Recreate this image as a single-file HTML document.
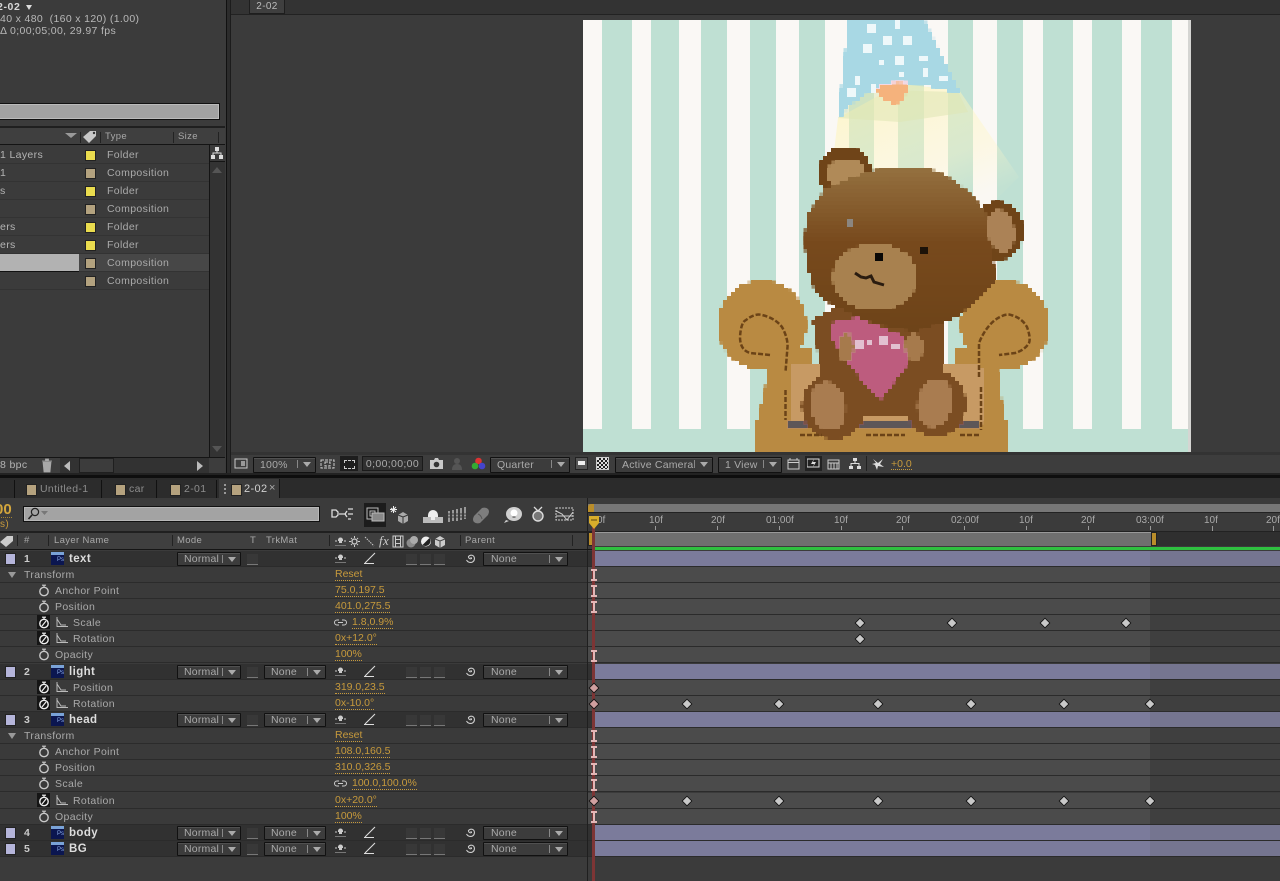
<!DOCTYPE html>
<html><head><meta charset="utf-8"><style>
html,body{margin:0;padding:0;background:#3b3b3b}
#p{position:relative;width:1280px;height:881px;overflow:hidden;background:#3b3b3b;font:10.5px/14px "Liberation Sans",sans-serif;color:#b4b4b4;letter-spacing:.35px;filter:blur(.3px)}
#p div,#p span,#p svg{position:absolute;display:block}
.t{white-space:nowrap}
.dd{height:12px;background:#3c3c3c;border:1px solid #111;border-radius:1px;box-shadow:inset 0 1px #505050;color:#aaa;line-height:12px;text-indent:6px;font-size:10.5px;letter-spacing:.2px;white-space:nowrap}
.dd:after{content:"";position:absolute;right:4px;top:4px;border:4px solid transparent;border-top:5px solid #aaa;border-bottom:0}
.dd:before{content:"";position:absolute;right:17px;top:2px;width:1px;height:8px;background:#888}
.r{left:0;width:1280px;height:16px;background:#3a3a3a;border-bottom:1px solid #2b2b2b;box-sizing:border-box}
.r .tr{left:588px;width:562px;top:0;height:15px;background:#4b4b4b}
.r .tr2{left:1150px;width:130px;top:0;height:15px;background:#3f3f3f}
.l{background:#313131}
.l .bar{left:594px;width:686px;top:0;height:15px;background:#7b7b9b}
.l .bar2{left:1150px;width:130px;top:0;height:15px;background:#757590}
.sw{left:5px;top:2px;width:9px;height:10px;background:#b5b5da;border:1px solid #222}
.n{left:24px;top:1px;font-weight:bold;color:#ccc}
.nm{left:69px;top:1px;font-weight:bold;color:#ddd;font-size:11.5px;letter-spacing:.4px}
.ps{left:51px;top:1px;width:13px;height:13px;background:#0b1650;border-top:3px solid #7aa3d8;box-sizing:border-box;font-size:6px;line-height:10px;text-align:right;color:#8fb0e8;letter-spacing:0}
.v{color:#c79a3c;border-bottom:1px dotted #c79a3c;line-height:11px;top:2px;white-space:nowrap;letter-spacing:0}
.pn{top:1px;white-space:nowrap;color:#aaa}
.k{width:6px;height:6px;background:#c9c9c9;border:1px solid #111;transform:rotate(45deg);z-index:3}
.i{left:591px;width:6px;height:12px;z-index:3;background:linear-gradient(#e3b7b7,#e3b7b7) 2px 0/2px 12px no-repeat,linear-gradient(#e3b7b7,#e3b7b7) 0 0/6px 2px no-repeat,linear-gradient(#e3b7b7,#e3b7b7) 0 10px/6px 2px no-repeat}
.box{top:3px;width:11px;height:10px;background:#383838;border-bottom:1px solid #777}
.c{color:#a8a8a8;top:0;white-space:nowrap}
.ty{left:107px;color:#aaa}
.cs{left:85px;width:9px;height:9px;border:1px solid #222}
.tab{top:480px;height:18px;background:#2c2c2c;border-right:1px solid #111}
.q{width:9px;height:10px;background:#b5a27e;top:484px;border:1px solid #222}
.rl{top:514px;font-size:10px;color:#aaa;white-space:nowrap;letter-spacing:0}
.tk{width:1px;height:4px;top:526px;background:#999}
.sh{left:335px;top:3px;width:11px;height:9px}
.ln{left:364px;top:1px;width:12px;height:12px}
.sp{left:465px;top:1px;width:11px;height:11px}
.st{left:38px;top:1px;width:12px;height:13px}
.stb{left:37px;top:0;width:13px;height:14px;background:#151515}
.gr{left:56px;top:2px;width:12px;height:10px}
</style></head><body><div id="p">
<svg width="0" height="0" style="left:0;top:0"><defs>
<symbol id="sw" viewBox="0 0 12 13"><circle cx="6" cy="7.500" r="4.200" fill="none" stroke="#c8c8c8" stroke-width="1.400"/><path d="M4 1.200h4M6 1.200v2" stroke="#c8c8c8" stroke-width="1.200"/></symbol>
<symbol id="sa" viewBox="0 0 12 13"><circle cx="6" cy="7.500" r="4.200" fill="none" stroke="#eee" stroke-width="1.400"/><path d="M4 1.200h4M6 1.200v2M4 10l4-5" stroke="#eee" stroke-width="1.200"/></symbol>
<symbol id="gr" viewBox="0 0 12 10"><path d="M1 0v9.500h11M1 2l4 6h5" fill="none" stroke="#bbb"/></symbol>
<symbol id="sh" viewBox="0 0 11 9"><path d="M0 4h2M9 4h2" stroke="#ccc"/><path d="M3 3a2.500 2.500 0 015 0v1h-1v2h-3v-2h-1z" fill="#ccc"/><path d="M0 8.500h11" stroke="#777"/></symbol>
<symbol id="ln" viewBox="0 0 12 12"><path d="M1 11L11 1M0 11.500h10" stroke="#ddd" stroke-width="1.100"/></symbol>
<symbol id="sp" viewBox="0 0 11 11"><path d="M5.500 5.500a1 1 0 011 1 2 2 0 01-3-2 3.500 3.500 0 015-.5 4 4 0 01-1 6 4.500 4.500 0 01-6-2" fill="none" stroke="#ccc" stroke-width="1.100"/></symbol>
<filter id="px" filterUnits="userSpaceOnUse" primitiveUnits="userSpaceOnUse" x="583" y="20" width="608" height="432" color-interpolation-filters="sRGB"><feFlood x="585" y="22" width="1" height="1"/><feComposite x="583" y="20" width="4" height="4"/><feTile result="a"/><feComposite in="SourceGraphic" in2="a" operator="in"/><feMorphology operator="dilate" radius="2"/></filter>
<linearGradient id="hd" x1="0" y1="0" x2="0" y2="1"><stop offset="0" stop-color="#94703f"/><stop offset=".45" stop-color="#77491c"/><stop offset="1" stop-color="#6d4318"/></linearGradient>
<linearGradient id="lg" x1="0" y1="0" x2=".6" y2="1"><stop offset="0" stop-color="#fff3a8" stop-opacity=".6"/><stop offset=".7" stop-color="#fff6c8" stop-opacity=".4"/><stop offset="1" stop-color="#fff6c8" stop-opacity=".05"/></linearGradient>
</defs></svg>

<!-- project panel -->
<div style="left:226px;top:0;width:1px;height:473px;background:#111"></div>
<div style="left:230px;top:0;width:1px;height:473px;background:#1c1c1c"></div>
<div style="left:227px;top:0;width:3px;height:473px;background:#2c2c2c"></div>
<div class="t" style="left:-3px;top:0;color:#d8d8d8;font-weight:bold;letter-spacing:.6px;width:40px;height:14px">2-02 <span style="left:29px;top:5px;border:3.500px solid transparent;border-top:5px solid #ddd;border-bottom:0"></span></div>
<div class="t" style="left:0;top:12px;color:#b8b8b8">40 x 480&nbsp; (160 x 120) (1.00)</div>
<div class="t" style="left:0;top:24px;color:#b8b8b8">&#916; 0;00;05;00, 29.97 fps</div>
<div style="left:-3px;top:103px;width:221px;height:15px;background:#a2a2a2;border:1px solid #111;box-shadow:inset 0 0 0 1px #bbb"></div>
<div style="left:0;top:126px;width:225px;height:2px;background:#1f1f1f"></div>
<div style="left:0;top:128px;width:225px;height:16px;background:#3f3f3f"></div>
<div style="left:0;top:144px;width:225px;height:1px;background:#141414"></div>
<div style="left:65px;top:133px;border:6px solid transparent;border-top:5px solid #999;border-bottom:0"></div>
<div style="left:80px;top:132px;width:1px;height:11px;background:#222"></div>
<svg style="left:82px;top:129px" width="16" height="15"><path d="M1 8l7-6h6v5l-7 7z" fill="#c8c8c8"/><circle cx="12" cy="4" r="1.200" fill="#333"/></svg>
<div style="left:100px;top:132px;width:1px;height:11px;background:#222"></div>
<div class="c" style="left:105px;top:130px;font-size:9.500px">Type</div>
<div style="left:173px;top:132px;width:1px;height:11px;background:#222"></div>
<div class="c" style="left:178px;top:130px;font-size:9.500px">Size</div>
<div style="left:218px;top:132px;width:1px;height:11px;background:#222"></div>
<div style="left:0;top:163px;width:209px;height:1px;background:#333"></div>
<div style="left:0;top:181px;width:209px;height:1px;background:#333"></div>
<div style="left:0;top:199px;width:209px;height:1px;background:#333"></div>
<div style="left:0;top:217px;width:209px;height:1px;background:#333"></div>
<div style="left:0;top:235px;width:209px;height:1px;background:#333"></div>
<div style="left:0;top:253px;width:209px;height:1px;background:#333"></div>
<div style="left:0;top:271px;width:209px;height:1px;background:#333"></div>
<div style="left:0;top:289px;width:209px;height:1px;background:#333"></div>
<div style="left:79px;top:254px;width:130px;height:17px;background:#474747"></div>
<div style="left:0;top:254px;width:79px;height:17px;background:#b2b2b2;border-bottom:1px solid #111"></div>
<div class="t" style="left:0;top:148px">1 Layers</div><div class="cs" style="top:150px;background:#eadc4e"></div><div class="t ty" style="top:148px">Folder</div>
<div class="t" style="left:0;top:166px">1</div><div class="cs" style="top:168px;background:#b3a27f"></div><div class="t ty" style="top:166px">Composition</div>
<div class="t" style="left:0;top:184px">s</div><div class="cs" style="top:186px;background:#eadc4e"></div><div class="t ty" style="top:184px">Folder</div>
<div class="cs" style="top:204px;background:#b3a27f"></div><div class="t ty" style="top:202px">Composition</div>
<div class="t" style="left:0;top:220px">ers</div><div class="cs" style="top:222px;background:#eadc4e"></div><div class="t ty" style="top:220px">Folder</div>
<div class="t" style="left:0;top:238px">ers</div><div class="cs" style="top:240px;background:#eadc4e"></div><div class="t ty" style="top:238px">Folder</div>
<div class="cs" style="top:258px;background:#b3a27f"></div><div class="t ty" style="top:256px">Composition</div>
<div class="cs" style="top:276px;background:#b3a27f"></div><div class="t ty" style="top:274px">Composition</div>
<div style="left:209px;top:145px;width:1px;height:312px;background:#141414"></div>
<div style="left:210px;top:162px;width:15px;height:295px;background:#333"></div>
<div style="left:210px;top:161px;width:15px;height:1px;background:#151515"></div>
<svg style="left:210px;top:146px" width="15" height="15"><path d="M5 1h4v4H5zM1 9h4v4H1zM9 9h4v4H9z" fill="#ddd"/><path d="M7 5v2M3 9V7h8v2" stroke="#ddd" fill="none"/></svg>
<div style="left:212px;top:167px;border:5px solid transparent;border-bottom:6px solid #555;border-top:0"></div>
<div style="left:212px;top:446px;border:5px solid transparent;border-top:6px solid #555;border-bottom:0"></div>
<div style="left:0;top:457px;width:225px;height:1px;background:#151515"></div>
<div style="left:0;top:458px;width:225px;height:15px;background:#3d3d3d"></div>
<div class="t" style="left:0;top:458px">8 bpc</div>
<svg style="left:41px;top:458px" width="12" height="15"><path d="M2 4h8l-1 10H3zM1 3h10M4.500 3V1h3v2" fill="#a8a8a8" stroke="#a8a8a8" stroke-width=".8"/></svg>
<div style="left:60px;top:458px;width:149px;height:15px;background:#323232;border-bottom:1px solid #222"></div>
<div style="left:64px;top:461px;border:5px solid transparent;border-right:6px solid #bbb;border-left:0"></div>
<div style="left:79px;top:458px;width:35px;height:15px;background:#3c3c3c;border:1px solid #1f1f1f;box-sizing:border-box"></div>
<div style="left:197px;top:461px;border:5px solid transparent;border-left:6px solid #bbb;border-right:0"></div>

<!-- viewer -->
<div style="left:231px;top:14px;width:1049px;height:1px;background:#222"></div>
<div style="left:231px;top:0;width:1049px;height:14px;background:#333"></div>
<div class="t" style="left:249px;top:0;width:36px;height:14px;background:#3f3f3f;border:1px solid #1e1e1e;border-top:0;box-sizing:border-box;text-align:center;color:#bbb;font-size:10px">2-02</div>
<div style="left:231px;top:15px;width:1049px;height:440px;background:#3b3b3b"></div>

<svg style="left:583px;top:20px" width="608" height="432" viewBox="583 20 608 432">
<g shape-rendering="crispEdges">
<rect x="583" y="20" width="608" height="432" fill="#faf8f5"/>
<g fill="#bfe0d3">
<rect x="602" y="20" width="30" height="409"/><rect x="651" y="20" width="28" height="409"/><rect x="701" y="20" width="26" height="409"/><rect x="750" y="20" width="26" height="409"/><rect x="799" y="20" width="26" height="409"/><rect x="849" y="20" width="25" height="409"/><rect x="898" y="20" width="26" height="409"/><rect x="948" y="20" width="25" height="409"/><rect x="997" y="20" width="26" height="409"/><rect x="1043" y="20" width="30" height="409"/><rect x="1092" y="20" width="30" height="409"/><rect x="1141" y="20" width="31" height="409"/>
<rect x="583" y="429" width="608" height="23"/></g>
<rect x="1188" y="20" width="3" height="432" fill="#d5d5d2"/>
</g>
<path d="M838 118L833 160 875 170 985 210 1019 177 959 90 900 84z" fill="url(#lg)"/>
<path d="M838 118Q850 98 876 90L958 92 968 112 900 122z" fill="#dfe6b4" opacity=".55"/>
<g filter="url(#px)">
<path d="M849 20H924L960 94Q905 76 876 88 850 100 838 120z" fill="#a8d8e4"/>
<g fill="#eef8fa"><rect x="869" y="25" width="7" height="7"/><rect x="894" y="22" width="6" height="6"/><rect x="885" y="38" width="6" height="6"/><rect x="905" y="38" width="6" height="6"/><rect x="862" y="45" width="8" height="8"/><rect x="896" y="56" width="7" height="7"/><rect x="920" y="56" width="6" height="6"/><rect x="878" y="60" width="6" height="6"/><rect x="854" y="78" width="7" height="7"/><rect x="899" y="72" width="6" height="6"/><rect x="922" y="70" width="6" height="6"/><rect x="941" y="75" width="7" height="7"/><rect x="871" y="85" width="5" height="7"/><rect x="847" y="89" width="8" height="8"/></g>
<path d="M876 88q14-8 33-5-2 14-14 21-12-4-19-16z" fill="#f5b27c"/>
<!-- chair -->
<g fill="#b98a42"><circle cx="762" cy="325" r="44"/><circle cx="1005" cy="325" r="44"/><path d="M770 350h42v102h-55q1-40 8-60zM955 350h40l5 40 8 62h-53z"/><rect x="757" y="420" width="251" height="32"/></g>
<rect x="790" y="363" width="193" height="64" rx="10" fill="#c79a64"/>
<rect x="788" y="421" width="190" height="7" fill="#5d5658"/>
<!-- body -->
<path d="M813 320l45-23 60 5 26 25v50l-10 20-20 20h-85l-8-20-2-40z" fill="#7b4d22"/>
<path d="M833 323L857 318 904 337 908 363 880 400 872 392 849 363 833 340z" fill="#bd5c7e"/>
<ellipse cx="834" cy="406" rx="33" ry="34" fill="#7b4d22"/><ellipse cx="936" cy="404" rx="31" ry="34" fill="#7b4d22"/>
<ellipse cx="828" cy="406" rx="17" ry="24" transform="rotate(-10 828 406)" fill="#a97c50"/><ellipse cx="935" cy="403" rx="17" ry="24" transform="rotate(12 935 403)" fill="#a97c50"/>
<ellipse cx="846" cy="347" rx="8" ry="14" fill="#a67a4c"/><ellipse cx="914" cy="347" rx="9" ry="13" fill="#a67a4c"/>
<g fill="#e2c0d0"><rect x="855" y="340" width="7" height="7"/><rect x="866" y="339" width="6" height="6"/><rect x="881" y="338" width="6" height="6"/><rect x="893" y="343" width="6" height="6"/></g>
<!-- ears/head -->
<circle cx="845" cy="173" r="26" fill="#6f4418"/><ellipse cx="846" cy="174" rx="19" ry="15" fill="#b08a58"/>
<ellipse cx="997" cy="231" rx="26" ry="29" fill="#6f4418"/>
<path d="M825 190Q860 165 925 168 960 178 985 212L996 280Q975 316 916 332 850 325 815 290 800 250 808 215z" fill="url(#hd)"/>
<ellipse cx="1001" cy="231" rx="13" ry="21" transform="rotate(-10 1001 231)" fill="#ab8256"/>
<ellipse cx="875" cy="277" rx="42" ry="33" fill="#a8814f"/>
</g>
<!-- stitches and face sit above the pixelated layer so thin strokes survive -->
<g fill="none" stroke="#6b4317" stroke-width="2.500" stroke-dasharray="5 2"><path d="M770 355L750 353Q740 350 740 337 741 322 746 320 755 313 762 315 775 318 782 327 788 338 787.500 347L785.500 372"/><path d="M979 377V343Q985 328 995 320 1005 313 1011 315 1022 318 1027 327 1031 338 1029 343 1025 350 1015 353L999 355"/><path d="M785.500 390V420M981 387V430M800 435H822M866 435H905M960 435H981"/></g>
<rect x="875" y="253" width="8" height="8" fill="#0a0806"/>
<path d="M855 273l6 4 5 1 5-2 3 6 10 3" stroke="#2a1c10" stroke-width="3" fill="none"/>
<rect x="920" y="247" width="8" height="7" fill="#1c1208"/>
<rect x="847" y="219" width="6" height="8" fill="#8b8680"/>
</svg>

<!-- viewer toolbar -->
<div style="left:231px;top:452px;width:1049px;height:3px;background:#333"></div>
<div style="left:231px;top:455px;width:1049px;height:18px;background:#3d3d3d"></div>
<svg style="left:234px;top:457px" width="14" height="13"><path d="M1 2h12v9H1z" fill="none" stroke="#ccc"/><path d="M7 4h4v5H7z" fill="#999"/></svg>
<div class="dd" style="left:253px;top:457px;width:61px;height:14px;line-height:14px">100%</div>
<svg style="left:320px;top:457px" width="15" height="14"><path d="M1 3h13v8H1zM5 5h5v4H5z" fill="none" stroke="#ccc" stroke-dasharray="3 1"/></svg>
<div style="left:340px;top:456px;width:18px;height:15px;background:#1d1d1d"></div>
<div style="left:344px;top:460px;width:9px;height:7px;border:1px dashed #ccc"></div>
<div class="t" style="left:362px;top:456px;width:61px;height:15px;background:#303030;border:1px solid #1a1a1a;box-sizing:border-box;text-align:center;line-height:14px;color:#aaa">0;00;00;00</div>
<svg style="left:429px;top:457px" width="15" height="13"><path d="M1 3h4l1-2h3l1 2h4v9H1z" fill="#c8c8c8"/><circle cx="7.500" cy="7.500" r="2.800" fill="#333"/></svg>
<svg style="left:451px;top:457px" width="12" height="14"><circle cx="6" cy="4" r="3" fill="#555"/><path d="M1 13q0-6 5-6t5 6z" fill="#555"/></svg>
<svg style="left:471px;top:457px" width="15" height="14"><circle cx="7.500" cy="4" r="3.300" fill="#d33"/><circle cx="4" cy="9" r="3.300" fill="#3a3"/><circle cx="11" cy="9" r="3.300" fill="#44c"/></svg>
<div class="dd" style="left:490px;top:457px;width:78px;height:14px;line-height:14px">Quarter</div>
<div style="left:575px;top:457px;width:13px;height:13px;background:#555;border:1px solid #222;box-sizing:border-box"></div><div style="left:578px;top:461px;width:7px;height:4px;background:#eee"></div>
<div style="left:596px;top:457px;width:13px;height:13px;background:#bbb;border:1px solid #ccc;box-sizing:border-box;background-image:repeating-conic-gradient(#222 0 25%,#ddd 0 50%);background-size:4px 4px"></div>
<div class="dd" style="left:615px;top:457px;width:96px;height:14px;line-height:14px">Active Camera</div>
<div class="dd" style="left:718px;top:457px;width:62px;height:14px;line-height:14px">1 View</div>
<svg style="left:787px;top:457px" width="13" height="13"><path d="M1 3h11v9H1zM1 5.500h11M3 3V1M10 3V1" fill="none" stroke="#ccc"/></svg>
<div style="left:805px;top:456px;width:17px;height:15px;background:#222"></div><svg style="left:807px;top:458px" width="13" height="11"><path d="M0 1h12v8H0z" fill="none" stroke="#ddd"/><path d="M7 1L4 6h3l-1 3 3-5H6z" fill="#ddd"/></svg>
<svg style="left:827px;top:457px" width="13" height="13"><path d="M1 3h11v9H1zM4 6v6M7 6v6M10 6v6M1 6h11" fill="none" stroke="#ccc"/></svg>
<svg style="left:848px;top:457px" width="14" height="13"><path d="M5 1h4v3H5zM1 9h4v3H1zM9 9h4v3H9z" fill="#ddd"/><path d="M7 4v2M3 9V6.500h8V9" stroke="#ddd" fill="none"/></svg>
<div style="left:866px;top:456px;width:1px;height:15px;background:#222"></div>
<svg style="left:871px;top:457px" width="15" height="14"><path d="M2 2l5 4 5-4-3 5 4 3-6-1-1 4-2-5-3-1 4-1z" fill="#ddd"/></svg>
<div class="v" style="left:891px;top:459px;line-height:10px">+0.0</div>

<div style="left:0;top:473px;width:1280px;height:2px;background:#222"></div>
<div style="left:0;top:475px;width:1280px;height:3px;background:#0e0e0e"></div>
<div style="left:0;top:478px;width:1280px;height:20px;background:#2b2b2b"></div>
<div style="left:0;top:498px;width:1280px;height:383px;background:#3b3b3b"></div>

<!-- tabs -->
<div class="tab" style="left:0;width:14px"></div>
<div class="tab" style="left:15px;width:86px"></div>
<div class="tab" style="left:103px;width:53px"></div>
<div class="tab" style="left:158px;width:58px"></div>
<div class="tab" style="left:219px;width:60px;top:479px;height:19px;background:#3b3b3b;border-right:1px solid #151515"></div>
<div style="left:224px;top:484px;width:0;height:10px;border-left:2px dotted #999"></div>
<div class="q" style="left:26px"></div><div class="t" style="left:40px;top:482px;color:#8d8d8d">Untitled-1</div>
<div class="q" style="left:115px"></div><div class="t" style="left:129px;top:482px;color:#8d8d8d">car</div>
<div class="q" style="left:170px"></div><div class="t" style="left:184px;top:482px;color:#8d8d8d">2-01</div>
<div class="q" style="left:231px"></div><div class="t" style="left:244px;top:482px;color:#d0d0d0;font-size:11px">2-02</div>
<div class="t" style="left:269px;top:481px;color:#aaa;font-size:11px">&#215;</div>

<!-- timeline header -->
<div class="t" style="left:-5px;top:502px;color:#d3a63c;font-weight:bold;font-size:15px;letter-spacing:0;line-height:15px;border-bottom:1px dotted #a88530">00</div>
<div class="t" style="left:0;top:518px;color:#c79a3c;font-size:10px">s)</div>
<div style="left:23px;top:506px;width:295px;height:14px;background:#a3a3a3;border:1px solid #111;box-shadow:inset 0 0 0 1px #b8b8b8"></div>
<svg style="left:27px;top:507px" width="24" height="14"><circle cx="8" cy="5" r="3.600" fill="none" stroke="#222" stroke-width="1.200"/><path d="M5 8l-3.500 4" stroke="#222" stroke-width="1.600"/><path d="M14 4h7l-3.500 4z" fill="#777"/></svg>
<svg style="left:331px;top:507px" width="24" height="15"><path d="M1 3h4l2 2v3l-2 2H1zM17 2h5M17 7h5M17 12h3M8 7h7M16 4l-2 3 2 3" fill="none" stroke="#ddd" stroke-width="1.300"/></svg>
<div style="left:364px;top:503px;width:22px;height:24px;background:#1c1c1c"></div>
<svg style="left:366px;top:507px" width="20" height="18"><path d="M1 1h11v11H1z" fill="none" stroke="#bbb"/><path d="M4 4h5v5H4z" fill="none" stroke="#bbb"/><path d="M6 6h12v8H6z" fill="#888" stroke="#bbb"/></svg>
<svg style="left:390px;top:506px" width="20" height="18"><path d="M1 2l5 4M6 1L1 6M3.500 0v7M0 3.500h7" stroke="#eee"/><path d="M8 9l5-3 5 3v6l-5 3-5-3z" fill="#aaa"/><path d="M13 11v7M8 9l5 2 5-2" stroke="#333" fill="none"/></svg>
<svg style="left:423px;top:507px" width="20" height="16"><path d="M0 10h7M13 10h7v6H0v-6z" fill="#bbb"/><path d="M5 8a5 5 0 0110 0v2h-3v3H8v-3H5z" fill="#eee"/></svg>
<svg style="left:447px;top:506px" width="20" height="17"><path d="M1 5h2v11H1zM5 4h2v11H5zM9 3h2v12H9zM13 2h2v12h-2zM17 1h2v12h-2z" fill="#999"/><path d="M0 8h20M0 11h20" stroke="#3b3b3b"/></svg>
<svg style="left:472px;top:506px" width="18" height="18"><path d="M2 10l8-8q4-1 6 1t0 6l-8 8q-4 1-6-1t0-6z" fill="#7d7d7d"/><path d="M6 8q3 1 4 5" stroke="#555" fill="none"/></svg>
<svg style="left:503px;top:506px" width="20" height="18"><ellipse cx="11" cy="8" rx="8" ry="7" fill="#cfcfcf"/><circle cx="11" cy="7" r="3.500" fill="#fff"/><path d="M3 14l-2 3 5-2" fill="#cfcfcf"/><path d="M9.500 11h3" stroke="#333"/></svg>
<svg style="left:531px;top:506px" width="14" height="17"><circle cx="7" cy="10" r="5" fill="#777" stroke="#ddd" stroke-width="1.400"/><path d="M3 1l4 4 4-4" fill="none" stroke="#ddd" stroke-width="1.300"/></svg>
<svg style="left:555px;top:507px" width="19" height="15"><path d="M1 1h17v12H1z" fill="none" stroke="#ccc" stroke-dasharray="2 1"/><path d="M1 4l6 3 5 6 6-8M1 9h17" fill="none" stroke="#ccc"/></svg>

<!-- ruler -->
<div style="left:587px;top:498px;width:1px;height:52px;background:#1f1f1f"></div>
<div style="left:588px;top:504px;width:692px;height:8px;background:#777;border-bottom:1px solid #222"></div>
<div style="left:588px;top:504px;width:6px;height:8px;background:#b98d2a;border-radius:3px 0 0 0"></div>
<div class="rl" style="left:597px">0f</div><div class="rl" style="left:649px">10f</div><div class="rl" style="left:711px">20f</div><div class="rl" style="left:766px">01:00f</div><div class="rl" style="left:834px">10f</div><div class="rl" style="left:896px">20f</div><div class="rl" style="left:951px">02:00f</div><div class="rl" style="left:1019px">10f</div><div class="rl" style="left:1081px">20f</div><div class="rl" style="left:1136px">03:00f</div><div class="rl" style="left:1204px">10f</div><div class="rl" style="left:1266px">20f</div>
<div class="tk" style="left:655px"></div><div class="tk" style="left:717px"></div><div class="tk" style="left:779px"></div><div class="tk" style="left:841px"></div><div class="tk" style="left:902px"></div><div class="tk" style="left:964px"></div><div class="tk" style="left:1026px"></div><div class="tk" style="left:1088px"></div><div class="tk" style="left:1150px"></div><div class="tk" style="left:1212px;height:9px"></div><div class="tk" style="left:1273px;height:9px"></div>

<!-- column header -->
<div style="left:0;top:531px;width:587px;height:2px;background:#202020"></div>
<div style="left:0;top:533px;width:587px;height:16px;background:#3f3f3f"></div>
<div style="left:0;top:549px;width:1280px;height:1px;background:#151515"></div>
<div style="left:588px;top:531px;width:692px;height:1px;background:#222"></div>
<div style="left:594px;top:532px;width:557px;height:14px;background:#6f6f6f;border-top:1px solid #999;box-sizing:border-box"></div>
<div style="left:1151px;top:532px;width:129px;height:14px;background:#2f2f2f"></div>
<div style="left:588px;top:532px;width:6px;height:14px;background:#b98d2a;border:1px solid #222;box-sizing:border-box"></div>
<div style="left:1151px;top:532px;width:6px;height:14px;background:#b98d2a;border:1px solid #222;box-sizing:border-box"></div>
<div style="left:594px;top:547px;width:686px;height:3px;background:#2fc040"></div>
<svg style="left:0;top:534px" width="16" height="14"><path d="M0 8l7-6h6v5l-7 6z" fill="#ccc"/></svg>
<div class="c" style="left:17px;top:535px;width:1px;height:11px;background:#222"></div>
<div class="c" style="left:24px;top:534px;font-size:9.500px">#</div>
<div style="left:48px;top:535px;width:1px;height:11px;background:#222"></div>
<div class="c" style="left:54px;top:534px;font-size:9.500px">Layer Name</div>
<div style="left:172px;top:535px;width:1px;height:11px;background:#222"></div>
<div class="c" style="left:177px;top:534px;font-size:9.500px">Mode</div>
<div class="c" style="left:250px;top:534px;font-size:9.500px">T</div>
<div class="c" style="left:266px;top:534px;font-size:9.500px">TrkMat</div>
<div style="left:329px;top:535px;width:1px;height:11px;background:#222"></div>
<svg style="left:335px;top:537px" width="11" height="9"><use href="#sh"/></svg>
<svg style="left:349px;top:536px" width="11" height="11"><circle cx="5.500" cy="5.500" r="2.500" fill="none" stroke="#ccc" stroke-width="1.300"/><path d="M5.500 0v2M5.500 9v2M0 5.500h2M9 5.500h2M2 2l1 1M8 8l1 1M9 2L8 3M3 8L2 9" stroke="#ccc"/></svg>
<svg style="left:364px;top:536px" width="11" height="11"><path d="M1 1l9 9" stroke="#ccc" stroke-dasharray="1.500 1"/></svg>
<div class="t" style="left:379px;top:533px;color:#ccc;font:italic 13px 'Liberation Serif',serif">fx</div>
<svg style="left:392px;top:535px" width="12" height="13"><path d="M1 1h10v11H1zM3.500 1v11M8.500 1v11M3.500 4.500h5M3.500 8.500h5" fill="none" stroke="#ccc"/></svg>
<svg style="left:406px;top:535px" width="12" height="13"><circle cx="5" cy="8" r="4.500" fill="#8a8a8a"/><circle cx="8" cy="5" r="4" fill="#aaa"/></svg>
<svg style="left:420px;top:535px" width="12" height="13"><circle cx="6" cy="6.500" r="5" fill="#eee"/><path d="M9.500 3a5 5 0 01-7 7z" fill="#222"/></svg>
<svg style="left:434px;top:535px" width="12" height="13"><path d="M6 1l5 3v6l-5 3-5-3V4z" fill="#ccc"/><path d="M6 6v7M1 4l5 2 5-2" stroke="#444" fill="none"/></svg>
<div style="left:460px;top:535px;width:1px;height:11px;background:#222"></div>
<div class="c" style="left:465px;top:534px;font-size:9.500px">Parent</div>
<div style="left:572px;top:535px;width:1px;height:11px;background:#222"></div>

<!-- rows -->
<div class="r l" style="top:551px"><div class="bar"></div><div class="bar2"></div><div class="sw"></div><div class="n">1</div><div class="ps">Ps</div><div class="nm">text</div><div class="dd" style="left:177px;top:1px;width:62px">Normal</div><div class="box" style="left:247px"></div><svg class="sh"><use href="#sh"/></svg><svg class="ln"><use href="#ln"/></svg><div class="box" style="left:406px"></div><div class="box" style="left:420px"></div><div class="box" style="left:434px"></div><svg class="sp"><use href="#sp"/></svg><div class="dd" style="left:483px;top:1px;width:83px;text-indent:7px">None</div></div>
<div class="r" style="top:567px"><div class="tr"></div><div class="tr2"></div><div style="left:8px;top:5px;border:4px solid transparent;border-top:6px solid #999;border-bottom:0"></div><div class="pn" style="left:24px">Transform</div><div class="v" style="left:335px">Reset</div></div>
<div class="r" style="top:583px"><div class="tr"></div><div class="tr2"></div><svg class="st"><use href="#sw"/></svg><div class="pn" style="left:55px">Anchor Point</div><div class="v" style="left:335px">75.0,197.5</div></div>
<div class="r" style="top:599px"><div class="tr"></div><div class="tr2"></div><svg class="st"><use href="#sw"/></svg><div class="pn" style="left:55px">Position</div><div class="v" style="left:335px">401.0,275.5</div></div>
<div class="r" style="top:615px"><div class="tr"></div><div class="tr2"></div><div class="stb"></div><svg class="st"><use href="#sa"/></svg><svg class="gr"><use href="#gr"/></svg><div class="pn" style="left:73px">Scale</div><svg style="left:334px;top:3px" width="13" height="10"><path d="M5 2H3a2.500 2.500 0 000 5h2M8 2h2a2.500 2.500 0 010 5H8M4 4.500h5" fill="none" stroke="#ccc"/></svg><div class="v" style="left:352px">1.8,0.9%</div></div>
<div class="r" style="top:631px"><div class="tr"></div><div class="tr2"></div><div class="stb"></div><svg class="st"><use href="#sa"/></svg><svg class="gr"><use href="#gr"/></svg><div class="pn" style="left:73px">Rotation</div><div class="v" style="left:335px">0x+12.0°</div></div>
<div class="r" style="top:647px"><div class="tr"></div><div class="tr2"></div><svg class="st"><use href="#sw"/></svg><div class="pn" style="left:55px">Opacity</div><div class="v" style="left:335px">100%</div></div>
<div class="r l" style="top:664px"><div class="bar"></div><div class="bar2"></div><div class="sw"></div><div class="n">2</div><div class="ps">Ps</div><div class="nm">light</div><div class="dd" style="left:177px;top:1px;width:62px">Normal</div><div class="box" style="left:247px"></div><div class="dd" style="left:264px;top:1px;width:60px;text-indent:6px">None</div><svg class="sh"><use href="#sh"/></svg><svg class="ln"><use href="#ln"/></svg><div class="box" style="left:406px"></div><div class="box" style="left:420px"></div><div class="box" style="left:434px"></div><svg class="sp"><use href="#sp"/></svg><div class="dd" style="left:483px;top:1px;width:83px;text-indent:7px">None</div></div>
<div class="r" style="top:680px"><div class="tr"></div><div class="tr2"></div><div class="stb"></div><svg class="st"><use href="#sa"/></svg><svg class="gr"><use href="#gr"/></svg><div class="pn" style="left:73px">Position</div><div class="v" style="left:335px">319.0,23.5</div></div>
<div class="r" style="top:696px"><div class="tr"></div><div class="tr2"></div><div class="stb"></div><svg class="st"><use href="#sa"/></svg><svg class="gr"><use href="#gr"/></svg><div class="pn" style="left:73px">Rotation</div><div class="v" style="left:335px">0x-10.0°</div></div>
<div class="r l" style="top:712px"><div class="bar"></div><div class="bar2"></div><div class="sw"></div><div class="n">3</div><div class="ps">Ps</div><div class="nm">head</div><div class="dd" style="left:177px;top:1px;width:62px">Normal</div><div class="box" style="left:247px"></div><div class="dd" style="left:264px;top:1px;width:60px;text-indent:6px">None</div><svg class="sh"><use href="#sh"/></svg><svg class="ln"><use href="#ln"/></svg><div class="box" style="left:406px"></div><div class="box" style="left:420px"></div><div class="box" style="left:434px"></div><svg class="sp"><use href="#sp"/></svg><div class="dd" style="left:483px;top:1px;width:83px;text-indent:7px">None</div></div>
<div class="r" style="top:728px"><div class="tr"></div><div class="tr2"></div><div style="left:8px;top:5px;border:4px solid transparent;border-top:6px solid #999;border-bottom:0"></div><div class="pn" style="left:24px">Transform</div><div class="v" style="left:335px">Reset</div></div>
<div class="r" style="top:744px"><div class="tr"></div><div class="tr2"></div><svg class="st"><use href="#sw"/></svg><div class="pn" style="left:55px">Anchor Point</div><div class="v" style="left:335px">108.0,160.5</div></div>
<div class="r" style="top:760px"><div class="tr"></div><div class="tr2"></div><svg class="st"><use href="#sw"/></svg><div class="pn" style="left:55px">Position</div><div class="v" style="left:335px">310.0,326.5</div></div>
<div class="r" style="top:776px"><div class="tr"></div><div class="tr2"></div><svg class="st"><use href="#sw"/></svg><div class="pn" style="left:55px">Scale</div><svg style="left:334px;top:3px" width="13" height="10"><path d="M5 2H3a2.500 2.500 0 000 5h2M8 2h2a2.500 2.500 0 010 5H8M4 4.500h5" fill="none" stroke="#ccc"/></svg><div class="v" style="left:352px">100.0,100.0%</div></div>
<div class="r" style="top:793px"><div class="tr"></div><div class="tr2"></div><div class="stb"></div><svg class="st"><use href="#sa"/></svg><svg class="gr"><use href="#gr"/></svg><div class="pn" style="left:73px">Rotation</div><div class="v" style="left:335px">0x+20.0°</div></div>
<div class="r" style="top:809px"><div class="tr"></div><div class="tr2"></div><svg class="st"><use href="#sw"/></svg><div class="pn" style="left:55px">Opacity</div><div class="v" style="left:335px">100%</div></div>
<div class="r l" style="top:825px"><div class="bar"></div><div class="bar2"></div><div class="sw"></div><div class="n">4</div><div class="ps">Ps</div><div class="nm">body</div><div class="dd" style="left:177px;top:1px;width:62px">Normal</div><div class="box" style="left:247px"></div><div class="dd" style="left:264px;top:1px;width:60px;text-indent:6px">None</div><svg class="sh"><use href="#sh"/></svg><svg class="ln"><use href="#ln"/></svg><div class="box" style="left:406px"></div><div class="box" style="left:420px"></div><div class="box" style="left:434px"></div><svg class="sp"><use href="#sp"/></svg><div class="dd" style="left:483px;top:1px;width:83px;text-indent:7px">None</div></div>
<div class="r l" style="top:841px"><div class="bar"></div><div class="bar2"></div><div class="sw"></div><div class="n">5</div><div class="ps">Ps</div><div class="nm">BG</div><div class="dd" style="left:177px;top:1px;width:62px">Normal</div><div class="box" style="left:247px"></div><div class="dd" style="left:264px;top:1px;width:60px;text-indent:6px">None</div><svg class="sh"><use href="#sh"/></svg><svg class="ln"><use href="#ln"/></svg><div class="box" style="left:406px"></div><div class="box" style="left:420px"></div><div class="box" style="left:434px"></div><svg class="sp"><use href="#sp"/></svg><div class="dd" style="left:483px;top:1px;width:83px;text-indent:7px">None</div></div>
<div style="left:587px;top:550px;width:1px;height:331px;background:#1f1f1f"></div>
<div style="left:588px;top:857px;width:692px;height:24px;background:#3b3b3b"></div>

<!-- playhead -->
<div style="left:592px;top:522px;width:3px;height:359px;background:#7d3535;z-index:2"></div>
<svg style="left:589px;top:515px;z-index:3" width="11" height="15"><path d="M0 1h10v7l-5 6-5-6z" fill="#d9ad2b"/><path d="M2 5h6" stroke="#5a4510"/></svg>

<!-- keyframes -->
<div class="i" style="top:569px"></div><div class="i" style="top:585px"></div><div class="i" style="top:601px"></div><div class="i" style="top:650px"></div><div class="i" style="top:730px"></div><div class="i" style="top:746px"></div><div class="i" style="top:763px"></div><div class="i" style="top:779px"></div><div class="i" style="top:811px"></div>
<div class="k" style="left:856px;top:619px"></div><div class="k" style="left:948px;top:619px"></div><div class="k" style="left:1041px;top:619px"></div><div class="k" style="left:1122px;top:619px"></div>
<div class="k" style="left:856px;top:635px"></div>
<div class="k" style="left:590px;top:684px;background:#d0a0a0"></div>
<div class="k" style="left:590px;top:700px;background:#d0a0a0"></div><div class="k" style="left:683px;top:700px"></div><div class="k" style="left:775px;top:700px"></div><div class="k" style="left:874px;top:700px"></div><div class="k" style="left:967px;top:700px"></div><div class="k" style="left:1060px;top:700px"></div><div class="k" style="left:1146px;top:700px"></div>
<div class="k" style="left:590px;top:797px;background:#d0a0a0"></div><div class="k" style="left:683px;top:797px"></div><div class="k" style="left:775px;top:797px"></div><div class="k" style="left:874px;top:797px"></div><div class="k" style="left:967px;top:797px"></div><div class="k" style="left:1060px;top:797px"></div><div class="k" style="left:1146px;top:797px"></div>
</div></body></html>
